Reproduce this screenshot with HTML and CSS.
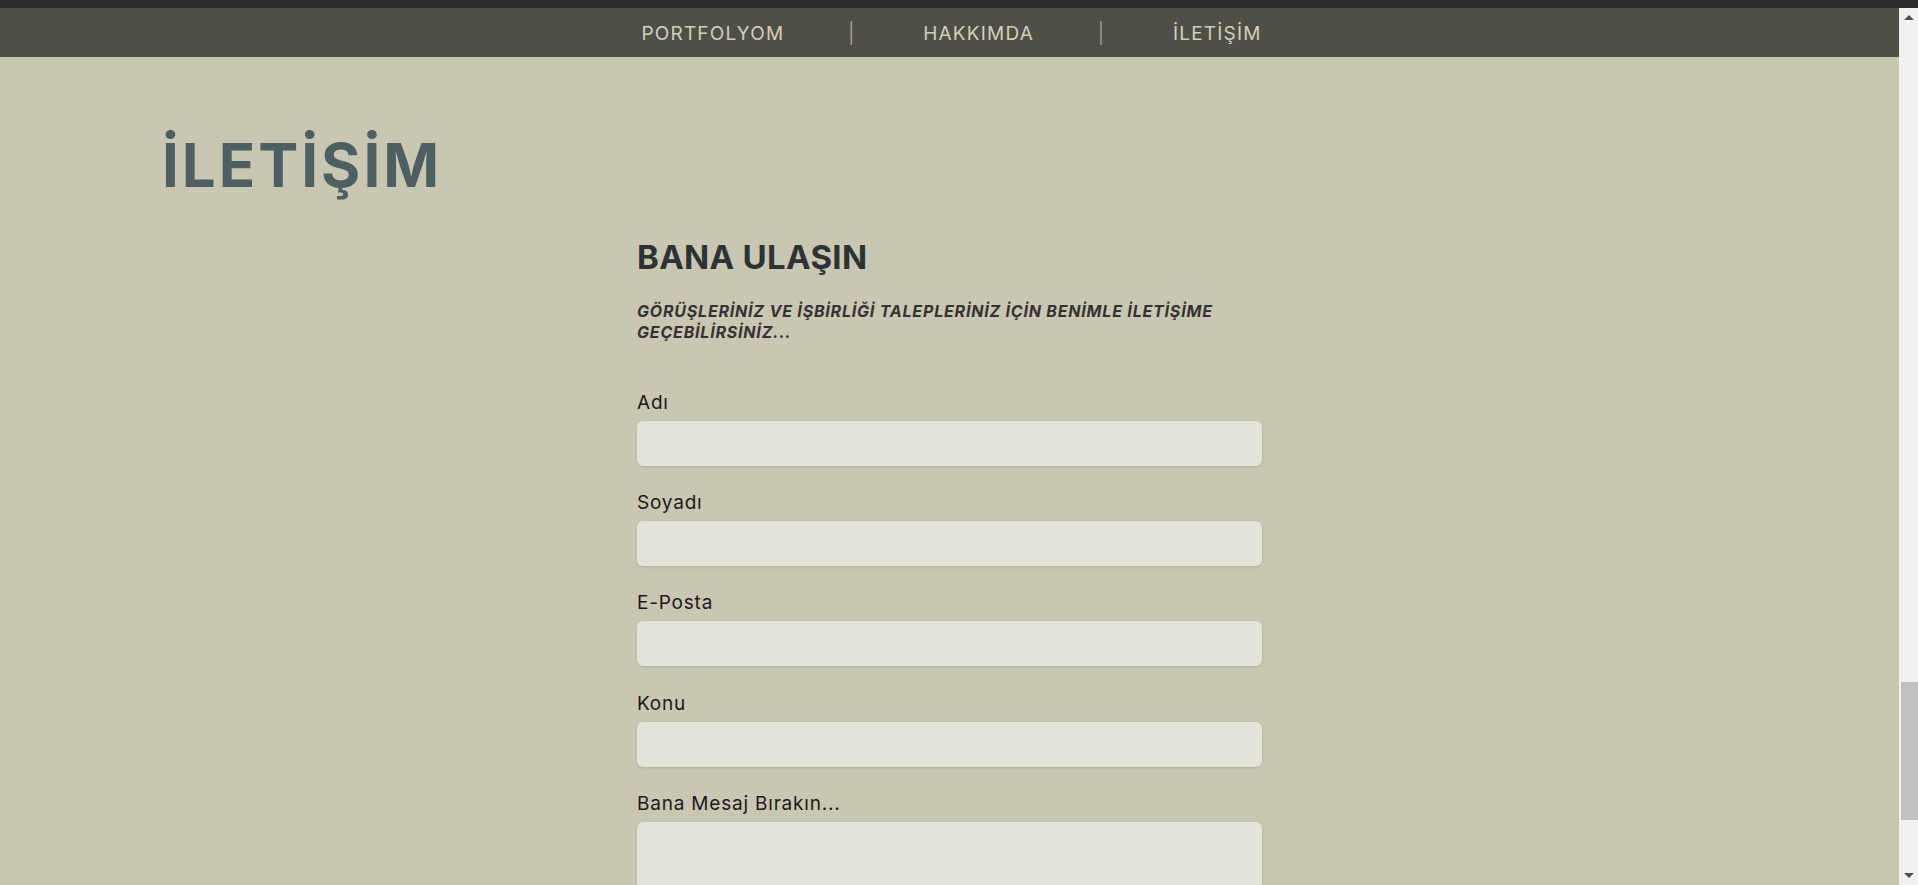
FILE: index.html
```html
<!DOCTYPE html>
<html lang="tr">
<head>
<meta charset="utf-8">
<title>İletişim</title>
<link rel="stylesheet" href="styles.css">
</head>
<body>
<div class="topstrip"></div>
<div class="window">
  <div class="page">
    <nav class="nav">
      <a class="nav-link" href="#">PORTFOLYOM</a>
      <span class="nav-sep">|</span>
      <a class="nav-link" href="#">HAKKIMDA</a>
      <span class="nav-sep">|</span>
      <a class="nav-link" href="#">İLETİŞİM</a>
    </nav>
    <main class="content">
      <h1 class="title">İLETİŞİM</h1>
      <section class="contact">
        <h2 class="contact-title">BANA ULAŞIN</h2>
        <p class="lead">GÖRÜŞLERİNİZ VE İŞBİRLİĞİ TALEPLERİNİZ İÇİN BENİMLE İLETİŞİME GEÇEBİLİRSİNİZ...</p>
        <form class="form">
          <label class="field-label" for="ad">Adı</label>
          <input class="field" id="ad" type="text">
          <label class="field-label" for="soyad">Soyadı</label>
          <input class="field" id="soyad" type="text">
          <label class="field-label" for="eposta">E-Posta</label>
          <input class="field" id="eposta" type="email">
          <label class="field-label" for="konu">Konu</label>
          <input class="field" id="konu" type="text">
          <label class="field-label" for="mesaj">Bana Mesaj Bırakın...</label>
          <textarea class="field field-area" id="mesaj"></textarea>
        </form>
      </section>
    </main>
  </div>
  <div class="scrollbar">
    <div class="sb-btn"><span class="arrow-up"></span></div>
    <div class="sb-track">
      <div class="sb-thumb" style="margin-top:655px;height:138px"></div>
    </div>
    <div class="sb-btn"><span class="arrow-down"></span></div>
  </div>
</div>
</body>
</html>
```

FILE: styles.css
```css
* { box-sizing: border-box; }

html, body {
  margin: 0;
  padding: 0;
  height: 885px;
  overflow: hidden;
}

body {
  display: flex;
  flex-direction: column;
  background: #c9c6b2;
  font-family: Inter, "Open Sans", sans-serif;
}

.topstrip {
  height: 8px;
  background: #2b2b2b;
  flex: none;
}

.window {
  flex: 1;
  display: flex;
  min-height: 0;
}

.page {
  flex: 1;
  display: flex;
  flex-direction: column;
  min-width: 0;
  overflow: hidden;
}

.nav {
  height: 49px;
  flex: none;
  background: #4f4f47;
  display: flex;
  justify-content: center;
  align-items: center;
  gap: 64px;
  padding-top: 1px;
  padding-left: 4px;
}

.nav-link {
  color: #d3d0b9;
  text-decoration: none;
  font-size: 19px;
  font-weight: 400;
  letter-spacing: 1.2px;
}

.nav-sep {
  color: #d3d0b9;
  font-size: 20px;
  font-weight: 200;
  padding-right: 5px;
}

.content {
  display: flex;
  flex-direction: column;
}

.title {
  margin: 78px 0 0 162px;
  font-size: 60px;
  line-height: 1;
  font-weight: 700;
  color: #4d5f62;
  letter-spacing: 3px;
}

.contact {
  width: 625px;
  margin: 43px auto 0;
  display: flex;
  flex-direction: column;
}

.contact-title {
  margin: 0;
  font-size: 33px;
  line-height: 1.2;
  font-weight: 700;
  color: #2d3335;
  letter-spacing: 0.3px;
}

.lead {
  margin: 23px 0 0;
  font-size: 16px;
  line-height: 21px;
  font-weight: 700;
  font-style: italic;
  color: #333333;
  letter-spacing: 0.8px;
}

.form {
  display: flex;
  flex-direction: column;
  margin-top: 48px;
}

.field-label {
  font-size: 19px;
  line-height: 24px;
  color: #1a1a1a;
  letter-spacing: 0.8px;
  margin-bottom: 6px;
}

.field {
  height: 45px;
  border: none;
  outline: none;
  border-radius: 6px;
  background: #e3e3da;
  box-shadow: 0 1px 3px rgba(0, 0, 0, 0.12);
  margin-bottom: 25.35px;
  font: inherit;
}

.field-area {
  height: 150px;
  resize: none;
}

.scrollbar {
  width: 19px;
  flex: none;
  background: #f1f1f1;
  display: flex;
  flex-direction: column;
}

.sb-btn {
  height: 19px;
  flex: none;
  display: flex;
  align-items: center;
  justify-content: center;
}

.arrow-up {
  width: 0;
  height: 0;
  border-left: 5px solid transparent;
  border-right: 5px solid transparent;
  border-bottom: 5px solid #505050;
}

.arrow-down {
  width: 0;
  height: 0;
  border-left: 5px solid transparent;
  border-right: 5px solid transparent;
  border-top: 5px solid #505050;
}

.sb-track {
  flex: 1;
  display: flex;
  flex-direction: column;
  padding-left: 2px;
}

.sb-thumb {
  background: #c1c1c1;
  flex: none;
}
```
